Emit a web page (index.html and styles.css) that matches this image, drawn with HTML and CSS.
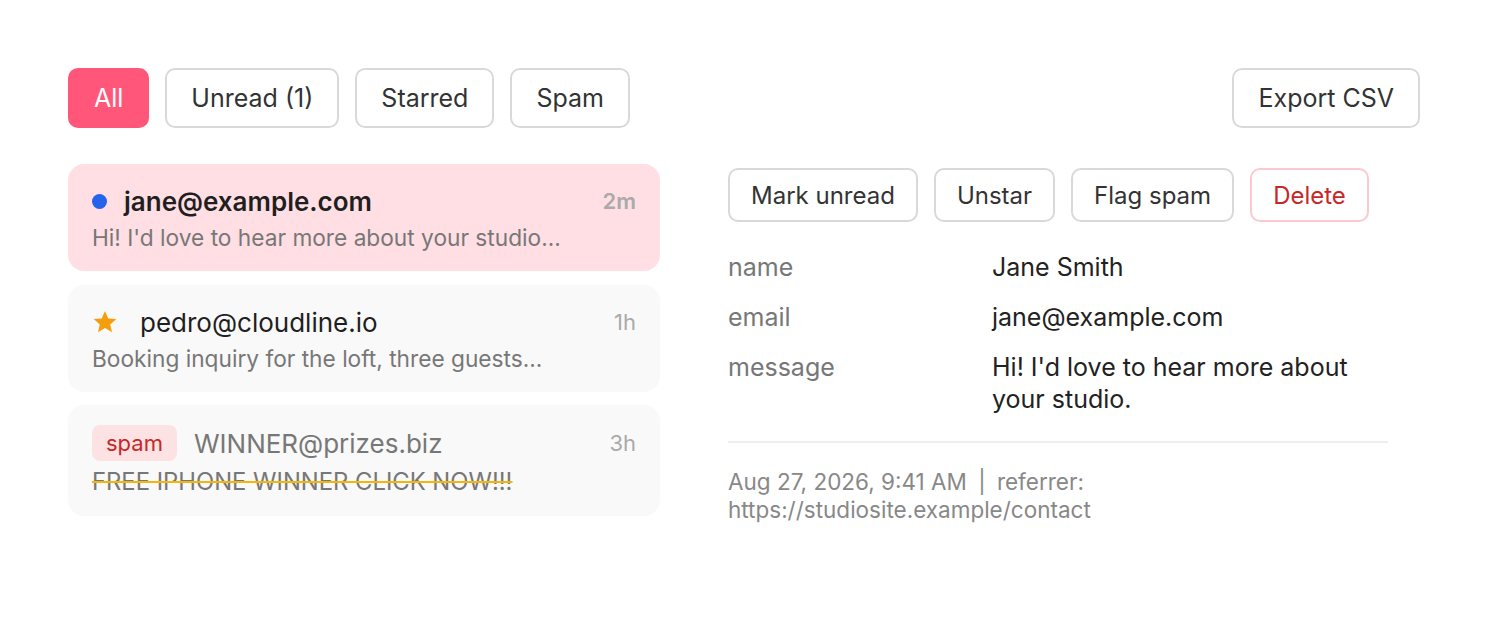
FILE: index.html
```html
<!DOCTYPE html>
<html lang="en">
<head>
    <meta charset="UTF-8">
    <meta name="viewport" content="width=device-width, initial-scale=1.0">
    <title>Inbox</title>
    <link rel="stylesheet" href="styles.css">
</head>
<body>
    <div class="page">
        <div class="toolbar">
            <div class="filters">
                <button class="btn btn-active">All</button>
                <button class="btn">Unread (1)</button>
                <button class="btn">Starred</button>
                <button class="btn">Spam</button>
            </div>
            <button class="btn">Export CSV</button>
        </div>

        <div class="content">
            <div class="list">
                <div class="item item-selected">
                    <div class="item-head">
                        <span class="dot"></span>
                        <span class="sender sender-unread">jane@example.com</span>
                        <span class="time time-unread">2m</span>
                    </div>
                    <div class="preview">Hi! I'd love to hear more about your studio...</div>
                </div>
                <div class="item">
                    <div class="item-head">
                        <svg class="star" width="26" height="26" viewBox="0 0 24 24">
                            <path d="M12 1.8l3 6.9 7.4.6-5.6 4.9 1.7 7.3L12 17.6l-6.5 3.9 1.7-7.3L1.6 9.3 9 8.7z" fill="#f59e0b"/>
                        </svg>
                        <span class="sender">pedro@cloudline.io</span>
                        <span class="time">1h</span>
                    </div>
                    <div class="preview">Booking inquiry for the loft, three guests...</div>
                </div>
                <div class="item item-spam">
                    <div class="item-head">
                        <span class="badge">spam</span>
                        <span class="sender">WINNER@prizes.biz</span>
                        <span class="time">3h</span>
                    </div>
                    <div class="preview preview-struck">FREE IPHONE WINNER CLICK NOW!!!</div>
                </div>
            </div>

            <div class="detail">
                <div class="actions">
                    <button class="btn btn-small">Mark unread</button>
                    <button class="btn btn-small">Unstar</button>
                    <button class="btn btn-small">Flag spam</button>
                    <button class="btn btn-small btn-danger">Delete</button>
                </div>
                <div class="fields">
                    <div class="label">name</div>
                    <div class="value">Jane Smith</div>
                    <div class="label">email</div>
                    <div class="value">jane@example.com</div>
                    <div class="label">message</div>
                    <div class="value">Hi! I'd love to hear more about your studio.</div>
                </div>
                <div class="meta">Aug 27, 2026, 9:41 AM&ensp;|&ensp;referrer: https://studiosite.example/contact</div>
            </div>
        </div>
    </div>
</body>
</html>
```

FILE: styles.css
```css
body {
    margin: 0;
    padding: 0;
    background: #ffffff;
    font-family: Inter, "Noto Sans", sans-serif;
    color: #222;
}
.page {
    padding: 68px 68px 0 68px;
}
.toolbar {
    display: flex;
    justify-content: space-between;
    align-items: center;
}
.filters {
    display: flex;
    gap: 16px;
}
.btn {
    font-family: inherit;
    font-size: 25px;
    color: #333;
    background: #fff;
    border: 2px solid #d9d9d9;
    border-radius: 10px;
    height: 60px;
    padding: 0 24px;
    cursor: pointer;
}
.btn-active {
    background: #ff5679;
    border-color: #ff5679;
    color: #fff;
}
.btn-small {
    font-size: 24px;
    height: 54px;
    padding: 0 21px;
}
.btn-danger {
    color: #c62828;
    border-color: #fcc9cc;
}
.content {
    display: flex;
    gap: 68px;
    margin-top: 36px;
}
.list {
    width: 592px;
    display: flex;
    flex-direction: column;
    gap: 14px;
}
.item {
    background: #f9f9f9;
    border-radius: 16px;
    padding: 20px 24px 19px 24px;
}
.item-selected {
    background: #ffdfe4;
}
.item-head {
    display: flex;
    align-items: center;
    height: 34px;
}
.dot {
    width: 15px;
    height: 15px;
    border-radius: 50%;
    background: #2563eb;
    margin-right: 17px;
}
.star {
    margin-right: 22px;
}
.sender {
    font-size: 26px;
    color: #1f1f1f;
    flex: 1;
}
.sender-unread {
    font-weight: 600;
}
.time {
    font-size: 22px;
    color: #aaa;
}
.time-unread {
    font-weight: 600;
}
.preview {
    margin-top: 6px;
    font-size: 22.7px;
    color: #777;
    line-height: 28px;
}
.item-spam {
    margin-top: -1px;
    padding-bottom: 20px;
}
.item-spam .item-head {
    height: 36px;
}
.item-spam .sender {
    color: #777;
}
.badge {
    background: #fde2e4;
    color: #c62828;
    font-size: 22px;
    line-height: 36px;
    border-radius: 8px;
    padding: 0 14px;
    margin-right: 17px;
}
.preview-struck {
    margin-top: 7px;
    font-size: 23.8px;
    text-decoration: line-through;
    text-decoration-color: #f5b50a;
    text-decoration-thickness: 2px;
}
.detail {
    width: 660px;
    padding-top: 4px;
}
.actions {
    display: flex;
    gap: 16px;
}
.fields {
    display: grid;
    grid-template-columns: 264px 1fr;
    row-gap: 18px;
    margin-top: 29px;
    padding-bottom: 26px;
    border-bottom: 2px solid #eee;
    font-size: 25px;
    line-height: 32px;
}
.label {
    color: #777;
}
.value {
    color: #222;
    max-width: 370px;
}
.meta {
    margin-top: 25px;
    font-size: 22.5px;
    line-height: 28px;
    color: #888;
    max-width: 400px;
}
```
